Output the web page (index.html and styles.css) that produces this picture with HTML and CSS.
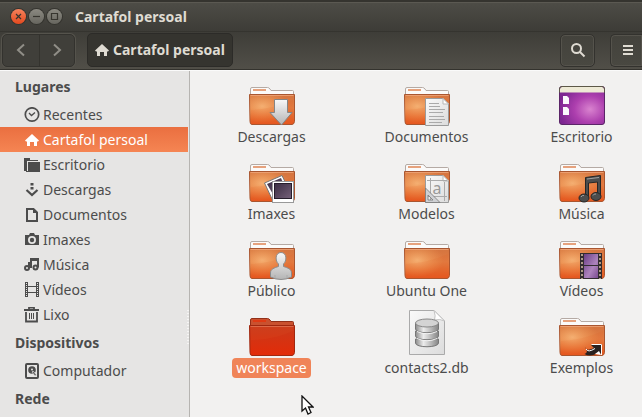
FILE: index.html
```html
<!DOCTYPE html>
<html lang="gl">
<head>
<meta charset="utf-8">
<title>Cartafol persoal</title>
<link rel="stylesheet" href="styles.css">
</head>
<body>
<svg class="defs" aria-hidden="true">
  <defs>
    <linearGradient id="front" x1="0" y1="0" x2="0" y2="1">
      <stop offset="0" stop-color="#d4743f"/><stop offset=".45" stop-color="#e27c42"/><stop offset=".7" stop-color="#e46a30"/><stop offset="1" stop-color="#e6561e"/>
    </linearGradient>
    <radialGradient id="glow" cx=".28" cy=".4" r=".6">
      <stop offset="0" stop-color="#ffcb8c" stop-opacity=".65"/><stop offset="1" stop-color="#ffb060" stop-opacity="0"/>
    </radialGradient>
    <linearGradient id="red" x1="0" y1="0" x2="0" y2="1">
      <stop offset="0" stop-color="#c83a1c"/><stop offset="1" stop-color="#e32b08"/>
    </linearGradient>
    <linearGradient id="silver" x1="0" y1="0" x2="0" y2="1">
      <stop offset="0" stop-color="#f8f8f8"/><stop offset="1" stop-color="#b4b4b4"/>
    </linearGradient>
    <linearGradient id="sheet" x1="0" y1="0" x2="1" y2="1">
      <stop offset="0" stop-color="#fafafa"/><stop offset="1" stop-color="#dcdcdc"/>
    </linearGradient>
    <linearGradient id="metal" x1="0" y1="0" x2="1" y2="0">
      <stop offset="0" stop-color="#8c8c8c"/><stop offset=".35" stop-color="#ececec"/><stop offset="1" stop-color="#858585"/>
    </linearGradient>
    <radialGradient id="purple" cx=".68" cy=".6" r=".7">
      <stop offset="0" stop-color="#d983cf"/><stop offset=".5" stop-color="#ad3fae"/><stop offset="1" stop-color="#7d2691"/>
    </radialGradient>
    <linearGradient id="photo" x1="0" y1="0" x2="1" y2="1">
      <stop offset="0" stop-color="#3a2d42"/><stop offset="1" stop-color="#756079"/>
    </linearGradient>
    <linearGradient id="film" x1="0" y1="0" x2="1" y2="1">
      <stop offset="0" stop-color="#6b3f85"/><stop offset=".6" stop-color="#ad83bd"/><stop offset="1" stop-color="#7b4b91"/>
    </linearGradient>
  </defs>
  <symbol id="folder" viewBox="0 0 48 48">
    <path d="M2.5 19V11Q2.500 9.500 4 9.500H19.500Q21 9.500 22 11L23 12.500H44.500Q45.500 12.500 45.500 13.500V19Z" fill="#fbfaf9" stroke="#b5aaa4"/>
    <path d="M5 12H18" stroke="#e6a27d" stroke-width="2"/>
    <path d="M1.500 16.500H46.500V43.500Q46 46.500 44 46.500H4Q2 46.500 2 43.500Z" fill="url(#front)" stroke="#a95630"/>
    <path d="M2 17H46V43L2 45Z" fill="url(#glow)"/>
    <path d="M2.500 17.500H45.500" stroke="#efa77c" opacity=".8"/>
    <path d="M3 32Q25 31 45 22V44H3Z" fill="#e4551c" opacity=".1"/>
  </symbol>
  <symbol id="page" viewBox="0 0 24 28">
    <path d="M.5 .5H18L23.500 6V27.500H.5Z" fill="url(#sheet)" stroke="#9b9b9b"/>
    <path d="M18 .5V6H23.500Z" fill="#fff" stroke="#b8b8b8"/>
  </symbol>
  <symbol id="home" viewBox="0 0 16 16">
    <path d="M8 2L15 8.500L14 9.500H13V14H10V10H6V14H3V9.500H2L1 8.500Z" fill="currentColor"/>
  </symbol>
</svg>

<div class="window">
  <header class="titlebar">
    <button class="wbtn close" aria-label="Pechar"><svg viewBox="0 0 15 15"><path d="M5 5L10 10M10 5L5 10"/></svg></button>
    <button class="wbtn" aria-label="Minimizar"><svg viewBox="0 0 15 15"><path d="M4 7.500H11"/></svg></button>
    <button class="wbtn" aria-label="Maximizar"><svg viewBox="0 0 15 15"><path d="M4.500 4.500H10.500V10.500H4.500Z"/></svg></button>
    <h1 class="title">Cartafol persoal</h1>
  </header>

  <div class="toolbar">
    <div class="nav">
      <button class="navbtn" aria-label="Atrás"><svg class="i16" viewBox="0 0 16 16"><path d="M11 2.500L5 8L11 13.500"/></svg></button>
      <button class="navbtn" aria-label="Adiante"><svg class="i16" viewBox="0 0 16 16"><path d="M5 2.500L11 8L5 13.500"/></svg></button>
    </div>
    <button class="path"><svg class="i16"><use href="#home"/></svg>Cartafol persoal</button>
    <button class="tool search" aria-label="Buscar"><svg class="i16" viewBox="0 0 16 16"><circle cx="6.500" cy="6.500" r="4.500"/><path d="M10 10L14.500 14.500"/></svg></button>
    <button class="tool menu" aria-label="Menú"><svg class="i16" viewBox="0 0 16 16"><path d="M3 4H13M3 8H13M3 12H13"/></svg></button>
  </div>

  <div class="body">
    <nav class="sidebar">
      <h2>Lugares</h2>
      <a href="#"><svg class="i16" viewBox="0 0 16 16"><g fill="none" stroke="currentColor"><circle cx="8" cy="7.500" r="6.700" stroke-width="1.700"/><path d="M5 6L7.500 8.500L11 5.500" stroke-width="1.300"/></g></svg>Recentes</a>
      <a href="#" class="active"><svg class="i16"><use href="#home"/></svg>Cartafol persoal</a>
      <a href="#"><svg class="i16" viewBox="0 0 16 16"><path d="M0 1H6V3H14V4H3V14H0Z" fill="currentColor"/><path d="M4 5H16V15H2V14H4Z" fill="currentColor"/></svg>Escritorio</a>
      <a href="#"><svg class="i16" viewBox="0 0 16 16"><path d="M6.500 1H9.500V3.500H6.500ZM6.500 5H9.500V7.500H6.500Z" fill="currentColor"/><path d="M2.500 8L8 13L13.500 8" fill="none" stroke="currentColor" stroke-width="2.200"/></svg>Descargas</a>
      <a href="#"><svg class="i16" viewBox="0 0 16 16"><path d="M3 2H9.500L13 5.500V14H3Z" fill="none" stroke="currentColor" stroke-width="2"/><path d="M9 2V6H13Z" fill="currentColor"/></svg>Documentos</a>
      <a href="#"><svg class="i16" viewBox="0 0 16 16"><path fill-rule="evenodd" d="M1 3H5L6 1H10L11 3H15V13H1ZM8 4A4 4 0 1 0 8 12A4 4 0 1 0 8 4Z" fill="currentColor"/><circle cx="8" cy="8" r="2.200" fill="currentColor"/></svg>Imaxes</a>
      <a href="#"><svg class="i16" viewBox="0 0 16 16"><g fill="none" stroke="currentColor" stroke-width="2"><circle cx="3" cy="11" r="2"/><circle cx="11.500" cy="10.500" r="2"/><path d="M5 11V6H7M7 11V2H14V10.500"/></g><path d="M7 1H15V4H7Z" fill="currentColor"/></svg>Música</a>
      <a href="#"><svg class="i16" viewBox="0 0 16 16"><path d="M1 0H4V15H1ZM12 0H15V15H12Z" fill="currentColor"/><path d="M4 4.500H12M4 10.500H12" stroke="currentColor"/><path d="M2.500 1V15M13.500 1V15" stroke="#e6e5e4" stroke-dasharray="1 1"/></svg>Vídeos</a>
      <a href="#"><svg class="i16" viewBox="0 0 16 16"><path d="M5 2V.5H10V2M2 5V14.500H13V5" fill="none" stroke="currentColor" stroke-width="1.800"/><path d="M0 3H15" stroke="currentColor" stroke-width="2"/><path d="M5.500 6V12M7.500 6V12M9.500 6V12" stroke="currentColor"/></svg>Lixo</a>
      <h2>Dispositivos</h2>
      <a href="#"><svg class="i16" viewBox="0 0 16 16"><rect x="2" y="1" width="12" height="14" rx="1" fill="none" stroke="currentColor" stroke-width="2"/><circle cx="8" cy="7" r="3.800" fill="currentColor"/><circle cx="8" cy="6.500" r="1" fill="#e6e5e4"/><path d="M8 9L9 8L12.500 12L11 13Z" fill="currentColor" stroke="#e6e5e4" stroke-width=".7"/></svg>Computador</a>
      <h2>Rede</h2>
      <span class="grip"></span>
    </nav>

    <main class="files">
      <figure class="item">
        <svg class="icon" viewBox="0 0 48 48"><use href="#folder"/><path d="M26.500 21.500H39.500V34.500H44L33.500 47L22 34.500H26.500Z" fill="url(#silver)" stroke="#858585"/></svg>
        <figcaption>Descargas</figcaption>
      </figure>
      <figure class="item">
        <svg class="icon" viewBox="0 0 48 48"><use href="#folder"/><use href="#page" x="22" y="20" width="24" height="28"/><path d="M26 25.500H36M26 28.500H37M26 31.500H42M26 34.500H40M26 38.500H41M26 41.500H42M26 44.500H39" stroke="#aaa"/></svg>
        <figcaption>Documentos</figcaption>
      </figure>
      <figure class="item">
        <svg class="icon" viewBox="0 0 48 48"><rect x="1.500" y="8.500" width="45" height="38" rx="2.500" fill="url(#purple)" stroke="#5b2568"/><path d="M2 14.500V11Q2 9 4 9H44Q46 9 46 11V14.500Z" fill="#eeead6"/><path d="M1.500 14.500V11Q1.500 8.500 4 8.500H44Q46.500 8.500 46.500 11V14.500" fill="none" stroke="#5d5848"/><path d="M5 18H9L11 20V26H5ZM5 29H9L11 31V37H5Z" fill="#fbf8fc"/></svg>
        <figcaption>Escritorio</figcaption>
      </figure>
      <figure class="item">
        <svg class="icon" viewBox="0 0 48 48"><use href="#folder"/><path d="M16.500 28L34 20.500L43 39L25 46Z" fill="#fff" stroke="#777"/><path d="M19 29L33 23L38 35L26 41Z" fill="url(#photo)"/><rect x="24.500" y="26.500" width="21" height="21" fill="#fff" stroke="#999"/><rect x="26.500" y="28.500" width="17" height="15" fill="url(#photo)" stroke="#251d2b"/></svg>
        <figcaption>Imaxes</figcaption>
      </figure>
      <figure class="item">
        <svg class="icon" viewBox="0 0 48 48"><use href="#folder"/><use href="#page" x="22" y="20" width="24" height="28"/><path d="M24 25.500H44M24 41.500H44M27.500 23V46M41.500 27V46" stroke="#aaa"/><text x="34" y="39" class="glyph">a</text><path fill-rule="evenodd" d="M22.500 33L37 47.500H22.500ZM25 40V45H30Z" fill="#cfd0d3" stroke="#777" stroke-width=".8"/></svg>
        <figcaption>Modelos</figcaption>
      </figure>
      <figure class="item">
        <svg class="icon" viewBox="0 0 48 48"><use href="#folder"/><g fill="#4b4d4d" stroke="#252727"><path d="M27.500 22.500L42.500 20.500V41H39.500V27L30.500 28V43H27.500Z"/><ellipse cx="26" cy="43" rx="5" ry="4"/><ellipse cx="38" cy="41.500" rx="5" ry="4"/></g><path d="M29 24L41 22.500M23 42Q24 40 26 40.500M35 40.500Q36 38.500 38 39" fill="none" stroke="#a0a3a3"/></svg>
        <figcaption>Música</figcaption>
      </figure>
      <figure class="item">
        <svg class="icon" viewBox="0 0 48 48"><use href="#folder"/><path d="M30.500 32C27 29 27 20.500 33 20.500S39 29 35.500 32V34.500C40 36 43.500 37 43.500 41V45Q33 50 22.500 45V41C22.500 37 26 36 30.500 34.500Z" fill="url(#silver)" stroke="#8c8c8c"/><path d="M27 43V46M39 43V46" stroke="#aaa"/></svg>
        <figcaption>Público</figcaption>
      </figure>
      <figure class="item">
        <svg class="icon" viewBox="0 0 48 48"><use href="#folder"/></svg>
        <figcaption>Ubuntu One</figcaption>
      </figure>
      <figure class="item">
        <svg class="icon" viewBox="0 0 48 48"><use href="#folder"/><rect x="22" y="21" width="22" height="26" fill="#322c30"/><path d="M26 22H40V33H26ZM26 34H40V46H26Z" fill="url(#film)"/><path d="M24 22V47M42 22V47" stroke="#ae9b87" stroke-width="2" stroke-dasharray="2 2"/></svg>
        <figcaption>Vídeos</figcaption>
      </figure>
      <figure class="item selected">
        <svg class="icon" viewBox="0 0 48 48"><path d="M2.500 19V11Q2.500 9.500 4 9.500H19.500Q21 9.500 22 11L23 12.500H44.500Q45.500 12.500 45.500 13.500V19Z" fill="#c9512f" stroke="#933019"/><path d="M5 12H18" stroke="#df3a14" stroke-width="2"/><path d="M1.500 16.500H46.500V43.500Q46 46.500 44 46.500H4Q2 46.500 2 43.500Z" fill="url(#red)" stroke="#a02810"/><path d="M2.500 17.500H45.500" stroke="#dc6848"/><path d="M3 18H45V22Q25 31 3 31Z" fill="#e86a35" opacity=".1"/></svg>
        <figcaption>workspace</figcaption>
      </figure>
      <figure class="item">
        <svg class="icon" viewBox="0 0 48 48"><path d="M6.500 1.500H31L41.500 12V45.500H6.500Z" fill="url(#sheet)" stroke="#aaa"/><path d="M31 1.500Q33 7 31.500 11Q37 9.500 41.500 12Z" fill="#fff" stroke="#c4c4c4"/><g fill="url(#metal)" stroke="#777"><path d="M12.500 30V34C12.500 39 35.500 39 35.500 34V30Z"/><path d="M12.500 22V27C12.500 32 35.500 32 35.500 27V22Z"/><path d="M12.500 14V20C12.500 25 35.500 25 35.500 20V14Z"/></g><ellipse cx="24" cy="14" rx="11.500" ry="4" fill="#d4d4d4" stroke="#888"/><path d="M14 22.500Q24 27 34 22.500M14 29.500Q24 34 34 29.500" fill="none" stroke="#f3f3f3"/></svg>
        <figcaption>contacts2.db</figcaption>
      </figure>
      <figure class="item">
        <svg class="icon" viewBox="0 0 48 48"><use href="#folder"/><path d="M27 38Q28 43 36 39L33 36L44 35V46L40.500 43Q33 49 26.500 45Q31 44 27 38Z" fill="#29211f"/><path d="M33.500 35.500H43.500V46M28 40Q30 44 37 39.500" fill="none" stroke="#fff"/><path d="M37 45L41 42L43 46Z" fill="#fff"/></svg>
        <figcaption>Exemplos</figcaption>
      </figure>
    </main>
  </div>
</div>
<svg class="cursor" viewBox="0 0 13 20" aria-hidden="true"><path d="M1 1V16L4.500 13L7 19L10 17.500L7.500 12H12Z" fill="#fff" stroke="#111" stroke-width="1.300"/></svg>
</body>
</html>
```
FILE: styles.css
```css
* { box-sizing: border-box; }

body {
  margin: 0;
  background: #f2f1f0;
  color: #4c4c4c;
  font: 14px/20px "Noto Sans", "Open Sans", sans-serif;
}

button {
  margin: 0;
  padding: 0;
  font: inherit;
  color: inherit;
}

svg { display: block; flex: none; }

.defs { position: absolute; width: 0; height: 0; }
.i16 { width: 16px; height: 16px; }

.window {
  display: flex;
  flex-direction: column;
  height: 100vh;
  overflow: hidden;
}

.titlebar {
  display: flex;
  align-items: center;
  flex: none;
  gap: 3px;
  height: 31px;
  padding: 2px 11px 0;
  background: linear-gradient(#35342f 0 2px, #5b5952 2px 3px, #4d4c46 3px, #3d3c37);
  color: #dfdbd2;
}

.wbtn {
  width: 15px;
  height: 15px;
  border: 0;
  border-radius: 50%;
  background: linear-gradient(#8b8981, #67665f);
  box-shadow: 0 0 0 1px #35342f;
}
.wbtn.close { background: linear-gradient(#f5825c, #e3491e); }
.wbtn path { fill: none; stroke: #37352f; stroke-width: 1.2; }

.title {
  margin: 0 0 0 10px;
  font-size: 14px;
  line-height: 20px;
}

.toolbar {
  display: flex;
  align-items: center;
  flex: none;
  height: 39px;
  padding: 1px 0 1px 2px;
  border-bottom: 1px solid #34332e;
  background: linear-gradient(#35342f 0 1px, #3e3d38 1px, #514f48);
  color: #dfdbd2;
}

.nav {
  display: flex;
  margin-right: 12px;
  border: 1px solid #33322e;
  border-radius: 5px;
  background: #403f3a;
  box-shadow: 0 0 0 1px #55534c;
}
.navbtn {
  display: flex;
  align-items: center;
  justify-content: center;
  width: 36px;
  height: 31px;
  border: 0;
  background: none;
}
.navbtn + .navbtn { width: 35px; border-left: 1px solid #34332e; }
.navbtn path { fill: none; stroke: #908e87; stroke-width: 2; }

.path {
  display: flex;
  align-items: center;
  gap: 3px;
  height: 34px;
  padding: 0 7px 0 6px;
  border: 1px solid #2c2b28;
  border-radius: 5px;
  background: #35342f;
  font-weight: bold;
}

.tool {
  display: flex;
  align-items: center;
  justify-content: center;
  width: 35px;
  height: 33px;
  border: 1px solid #33322e;
  border-radius: 5px;
  background: linear-gradient(#43423c, #494841);
  box-shadow: inset 0 0 0 1px #55534c;
}
.tool svg { fill: none; stroke: #dfdbd2; stroke-width: 2; }
.search { margin-left: auto; }
.menu {
  width: 32px;
  margin-left: 15px;
  padding-left: 3px;
  border-right: 0;
  border-radius: 5px 0 0 5px;
}

.body {
  display: flex;
  flex: 1;
  min-height: 0;
  border-top: 1px solid #fafafa;
}

.sidebar {
  position: relative;
  flex: none;
  width: 190px;
  padding-right: 1px;
  overflow: hidden;
  border-right: 1px solid #b6b4b1;
  background: #e6e5e4;
}
.sidebar h2 {
  margin: 0;
  padding-left: 15px;
  font-size: 14px;
  line-height: 31px;
}
.sidebar a {
  display: flex;
  align-items: center;
  gap: 3px;
  height: 25px;
  padding-left: 24px;
  color: inherit;
  text-decoration: none;
}
.sidebar .active {
  background: linear-gradient(#ea6f40, #f58553);
  color: #fff;
}

.grip {
  position: absolute;
  top: 239px;
  right: 0;
  width: 2px;
  height: 34px;
  background: repeating-linear-gradient(#f6f5f4 0 1px, transparent 1px 3px);
}

.files {
  display: grid;
  flex: 1;
  grid-template-columns: repeat(auto-fill, 115px);
  align-content: start;
  gap: 8px 40px;
  padding: 7px 0 0 24px;
  overflow: hidden;
  background: #f2f1f0;
}

.item {
  display: flex;
  flex-direction: column;
  align-items: center;
  gap: 1px;
  margin: 0;
}
.icon { width: 48px; height: 48px; }
.item figcaption {
  padding: 0 4px;
  border-radius: 4px;
  white-space: nowrap;
}
.selected figcaption { background: #f08458; color: #fff; }

.glyph {
  fill: #999;
  font-size: 16px;
  text-anchor: middle;
}

.cursor {
  position: absolute;
  top: 395px;
  left: 301px;
  width: 13px;
  height: 20px;
}
```
